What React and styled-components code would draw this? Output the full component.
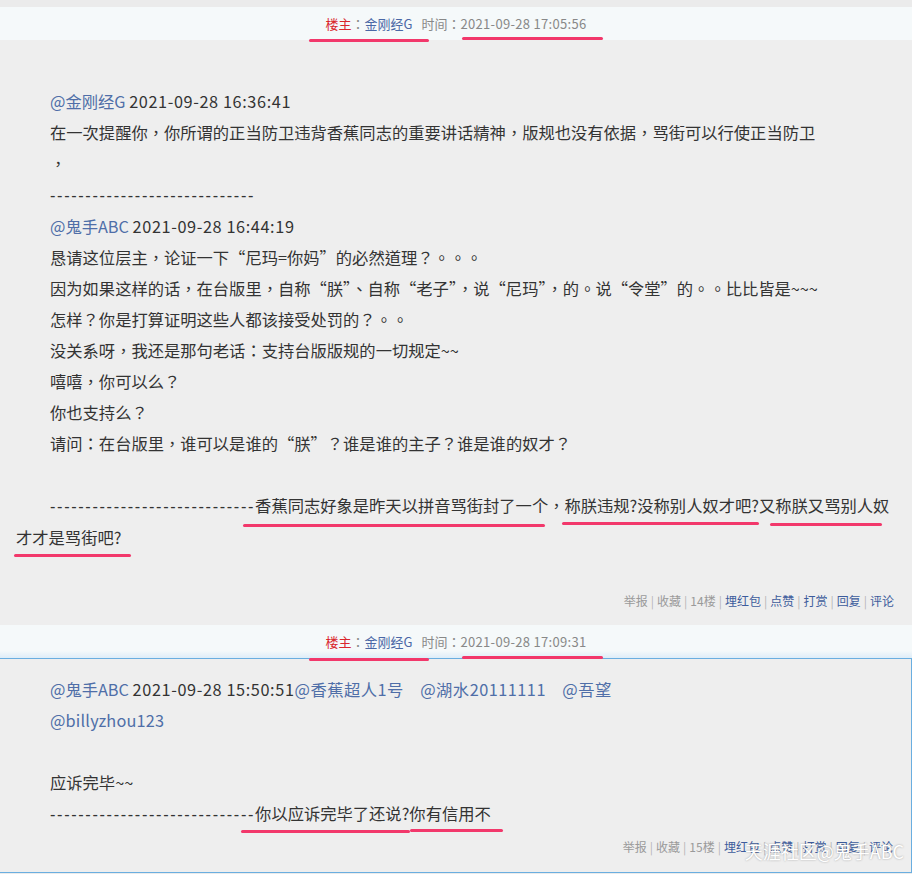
import React from 'react';
import styled, { createGlobalStyle } from 'styled-components';

const GlobalStyle = createGlobalStyle`
  body {
    margin: 0;
    background: #ebebeb;
    font-family: "Noto Sans CJK TC", "Noto Sans CJK SC", sans-serif;
  }
`;

const Page = styled.div`
  padding-top: 7px;
  width: 912px;
  overflow: hidden;
`;

const PostHeader = styled.div`
  height: 33px;
  display: flex;
  justify-content: center;
  align-items: center;
  gap: 9px;
  font-size: 13px;
  line-height: 16px;
  color: #888;
  background: ${(p) =>
    p.$active ? 'linear-gradient(to bottom, #f5f9fa 78%, #deedf8 100%)' : '#f5f9fa'};
`;

const Owner = styled.span`
  color: #d9262c;
`;

const User = styled.span`
  color: #4a68a6;
`;

const PostBody = styled.div`
  position: relative;
  background: #eeeeee;
  padding: 15px 12px ${(p) => (p.$active ? '15px' : '14px')} 16px;
  border: ${(p) => (p.$active ? '1px solid #6aaee0' : '0')};
  border-left: 0;
`;

const Line = styled.div`
  min-height: 31px;
  line-height: 31px;
  font-size: 16.3px;
  color: #333;
  text-indent: 34px;
`;

const Link = styled.span`
  color: #4f6ea8;
  letter-spacing: ${(p) => p.$ls || 0}px;
`;

const Stamp = styled.span`
  letter-spacing: ${(p) => p.$ls || 0.6}px;
`;

const Dashes = styled.span`
  font-family: "Liberation Sans", sans-serif;
  letter-spacing: 1.65px;
`;

const Mark = styled.span`
  position: relative;

  &::after {
    content: '';
    position: absolute;
    z-index: 2;
    left: ${(p) => p.$l || 0}px;
    right: ${(p) => p.$r || 0}px;
    bottom: ${(p) => p.$b || -10}px;
    height: 3px;
    border-radius: 2px;
    background: #f2386b;
  }
`;

const Actions = styled.div`
  margin-top: 7px;
  padding-right: 6px;
  display: flex;
  justify-content: flex-end;
  font-size: 12px;
  line-height: 20px;
  color: #9a9a9a;
`;

const Action = styled.span`
  color: ${(p) => (p.$link ? '#3d5c9c' : '#9a9a9a')};
`;

const Bar = styled.span`
  color: #b5b5b5;
  margin: 0 3px;
`;

const Watermark = styled.div`
  position: absolute;
  right: 7px;
  bottom: 10px;
  font-size: 18px;
  line-height: 22px;
  color: #ffffff;
  text-shadow: 0 0 2px rgba(60, 60, 60, 0.45);
  pointer-events: none;
`;

const DASH = '-----------------------------';

const Header = ({ time, active, marks }) => (
  <PostHeader $active={active}>
    <Mark $l={-17} $r={-16} $b={marks[0]}>
      <Owner>楼主</Owner>：<User>金刚经G</User>
    </Mark>
    <span>
      时间：
      <Mark $l={1} $r={-17} $b={marks[1]}>
        <Stamp $ls={0.3}>{time}</Stamp>
      </Mark>
    </span>
  </PostHeader>
);

const Footer = ({ floor }) => {
  const items = [
    ['举报', false],
    ['收藏', false],
    [`${floor}楼`, false],
    ['埋红包', true],
    ['点赞', true],
    ['打赏', true],
    ['回复', true],
    ['评论', true],
  ];
  return (
    <Actions>
      {items.map(([label, link], i) => (
        <React.Fragment key={label}>
          {i > 0 && <Bar>|</Bar>}
          <Action $link={link}>{label}</Action>
        </React.Fragment>
      ))}
    </Actions>
  );
};

const App = () => (
  <Page>
    <GlobalStyle />

    <Header time="2021-09-28 17:05:56" marks={[-10, -7]} />
    <PostBody>
      <Line />
      <Line>
        <Link>@金刚经G</Link> <Stamp>2021-09-28 16:36:41</Stamp>
      </Line>
      <Line>在一次提醒你，你所谓的正当防卫违背香蕉同志的重要讲话精神，版规也没有依据，骂街可以行使正当防卫</Line>
      <Line>，</Line>
      <Line>
        <Dashes>{DASH}</Dashes>
      </Line>
      <Line>
        <Link>@鬼手ABC</Link> <Stamp>2021-09-28 16:44:19</Stamp>
      </Line>
      <Line>恳请这位层主，论证一下“尼玛=你妈”的必然道理？。。。</Line>
      <Line>因为如果这样的话，在台版里，自称“朕”、自称“老子”，说“尼玛”，的。说“令堂”的。。比比皆是~~~</Line>
      <Line>怎样？你是打算证明这些人都该接受处罚的？。。</Line>
      <Line>没关系呀，我还是那句老话：支持台版版规的一切规定~~</Line>
      <Line>嘻嘻，你可以么？</Line>
      <Line>你也支持么？</Line>
      <Line>请问：在台版里，谁可以是谁的“朕”？谁是谁的主子？谁是谁的奴才？</Line>
      <Line />
      <Line>
        <Dashes>{DASH}</Dashes>
        <Mark $l={-12} $r={3} $b={-10}>香蕉同志好象是昨天以拼音骂街封了一个</Mark>，
        <Mark $l={-2} $r={0} $b={-8}>称朕违规?没称别人奴才吧?</Mark>
        <Mark $l={11} $r={7} $b={-9}>又称朕又骂别人奴</Mark>
        <Mark $l={-2} $r={-10} $b={-8}>才才是骂街吧?</Mark>
      </Line>
      <Line />
      <Footer floor={14} />
    </PostBody>

    <Header time="2021-09-28 17:09:31" active marks={[-11, -8]} />
    <PostBody $active>
      <Line>
        <Link>@鬼手ABC</Link> <Stamp>2021-09-28 15:50:51</Stamp>
        <Link $ls={0.5}>@香蕉超人1号</Link>　<Link $ls={0.5}>@湖水20111111</Link>　<Link $ls={0.5}>@吾望</Link>
      </Line>
      <Line>
        <Link $ls={0.2}>@billyzhou123</Link>
      </Line>
      <Line />
      <Line>应诉完毕~~</Line>
      <Line>
        <Dashes>{DASH}</Dashes>
        <Mark $l={-14} $r={-1} $b={-8}>你以应诉完毕了还说?</Mark>
        <Mark $l={1} $r={-12} $b={-7}>你有信用不</Mark>
      </Line>
      <Footer floor={15} />
      <Watermark>天涯社区@鬼手ABC</Watermark>
    </PostBody>
  </Page>
);

export default App;
